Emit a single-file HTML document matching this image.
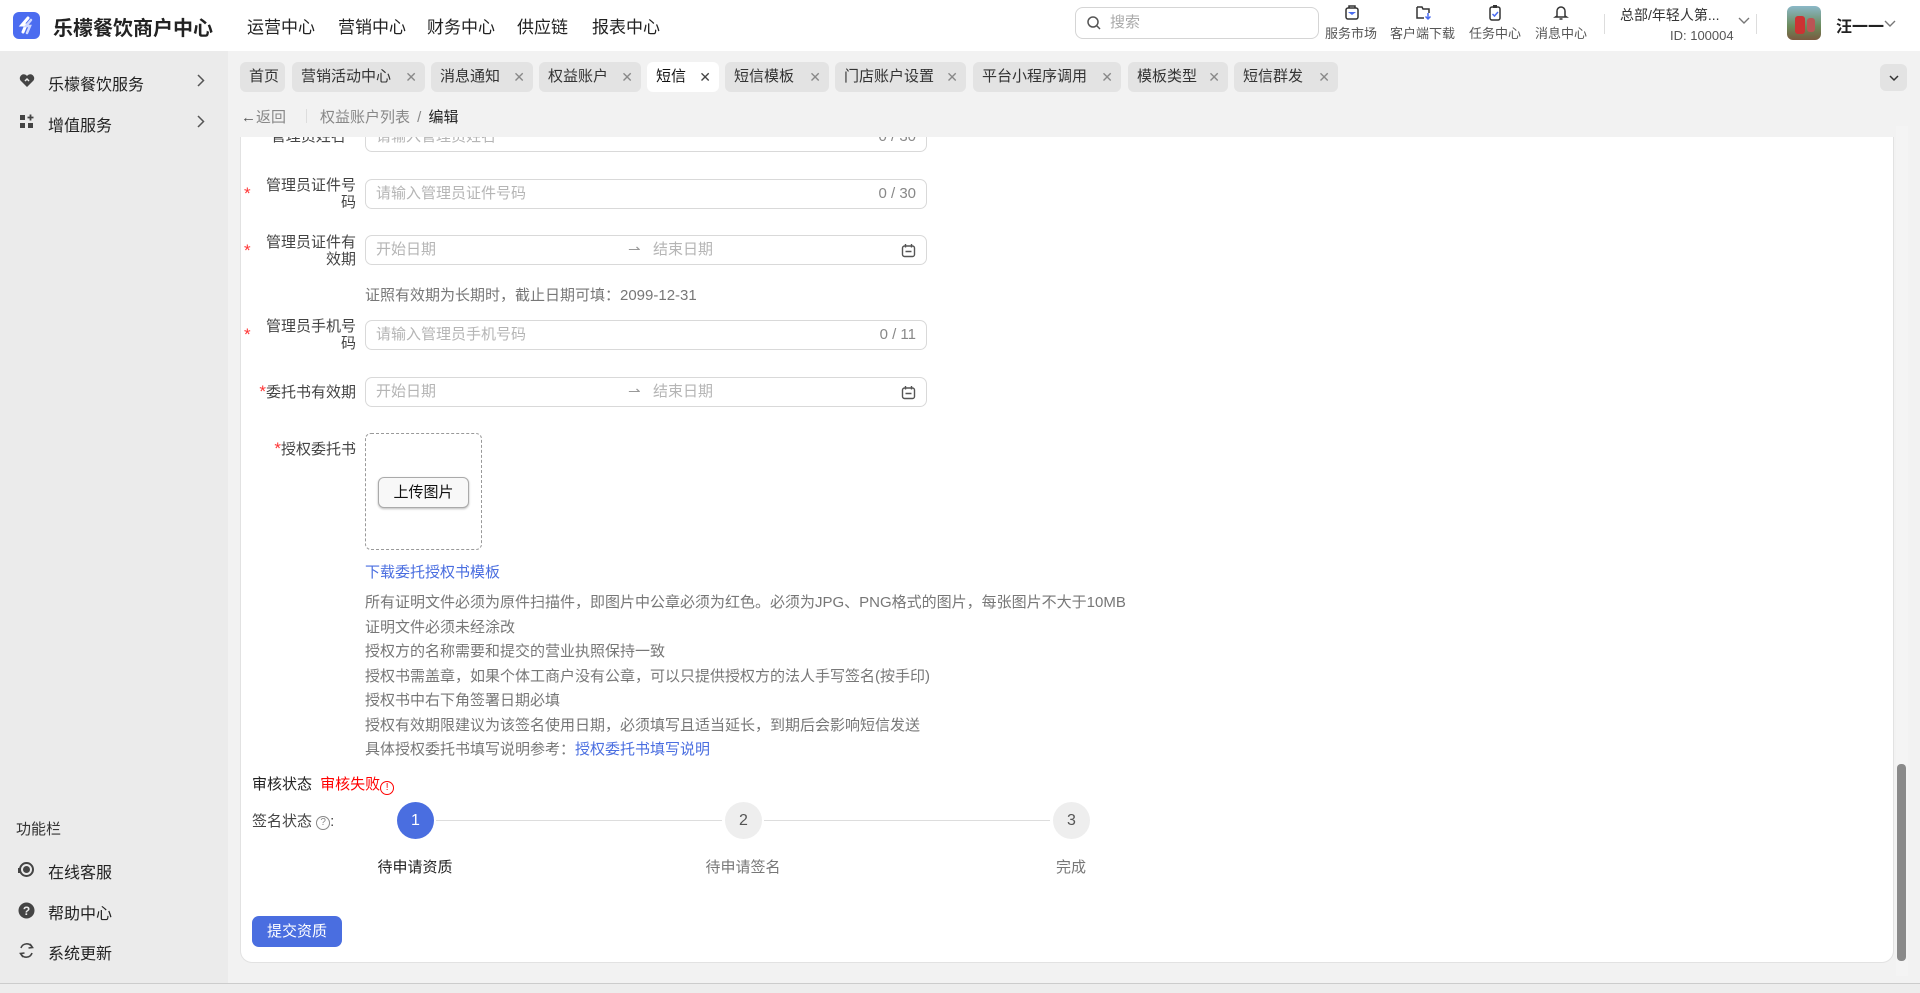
<!DOCTYPE html>
<html><head><meta charset="utf-8">
<style>
*{box-sizing:border-box;margin:0;padding:0}
body{width:1920px;height:993px;overflow:hidden;font-family:"Liberation Sans","Noto Sans CJK SC",sans-serif;background:#f2f2f2;position:relative;color:#333}
.abs{position:absolute}
.hdr{left:0;top:0;width:1920px;height:51px;background:#fff}
.side{left:0;top:51px;width:228px;height:932px;background:#ebebeb}
.nav{top:13px;font-size:17px;color:#222}
.tab{top:62px;height:30px;background:#e3e3e3;border-radius:6px;font-size:15px;color:#333;line-height:30px;padding-left:9px;white-space:nowrap}
.tab .x{position:absolute;right:8px;top:0;color:#888;font-size:14px}
.card{left:240px;top:137px;width:1654px;height:826px;background:#fff;border-radius:0 0 12px 12px;border:1px solid #e2e2e2;border-top:none}
.lbl{font-size:15px;color:#444;text-align:right;width:110px;line-height:17px}
.star{color:#f33;font-size:17px}
.inp{left:365px;width:562px;height:30px;border:1px solid #d9d9d9;border-radius:7px;font-size:15px;color:#b5b5b5;line-height:28px;padding-left:10px}
.cnt{position:absolute;right:10px;top:0;color:#888}
.note{left:365px;font-size:15px;color:#777;line-height:20px}
.si{font-size:13px;color:#555;top:23px}
</style></head><body>
<div class="abs hdr"></div>
<div class="abs" style="left:13px;top:12px;width:27px;height:27px;border-radius:6px;background:#4b6cf0"><svg width="27" height="27" viewBox="0 0 27 27"><path d="M15 6 L9 13 L13 13 L10 20" stroke="#fff" stroke-width="3" fill="none" stroke-linecap="round"/><path d="M18 8 L13 14 L17 14 L14 21" stroke="#cfd8ff" stroke-width="2.5" fill="none" stroke-linecap="round"/></svg></div>
<div class="abs" style="left:53px;top:12px;font-size:20px;font-weight:bold;color:#222">乐檬餐饮商户中心</div>
<div class="abs nav" style="left:247px">运营中心</div>
<div class="abs nav" style="left:338px">营销中心</div>
<div class="abs nav" style="left:427px">财务中心</div>
<div class="abs nav" style="left:517px">供应链</div>
<div class="abs nav" style="left:592px">报表中心</div>
<div class="abs" style="left:1075px;top:7px;width:244px;height:32px;border:1px solid #d5d5d5;border-radius:8px;font-size:15px;color:#aaa;line-height:30px;padding-left:34px">搜索
<svg class="abs" style="left:10px;top:7px" width="16" height="16" viewBox="0 0 16 16"><circle cx="7" cy="7" r="5" stroke="#555" stroke-width="1.5" fill="none"/><path d="M11 11 L14 14" stroke="#555" stroke-width="1.5"/></svg></div>
<svg class="abs" style="left:1344px;top:4px" width="16" height="17" viewBox="0 0 16 17"><rect x="2" y="4" width="12" height="11" rx="2" stroke="#333" stroke-width="1.5" fill="none"/><path d="M5 4 V2 H11 V4" stroke="#333" stroke-width="1.5" fill="none"/><path d="M4 8 H12 L8 11Z" fill="#4b6cf0"/></svg>
<div class="abs si" style="left:1325px">服务市场</div>
<svg class="abs" style="left:1415px;top:4px" width="17" height="17" viewBox="0 0 17 17"><path d="M2 3 H7 L8 5 H14 V9 M2 3 V14 H9" stroke="#333" stroke-width="1.5" fill="none"/><path d="M13 9 V15 M10.5 12.5 L13 15 L15.5 12.5" stroke="#4b6cf0" stroke-width="1.5" fill="none"/></svg>
<div class="abs si" style="left:1390px">客户端下载</div>
<svg class="abs" style="left:1487px;top:4px" width="16" height="17" viewBox="0 0 16 17"><rect x="3" y="3" width="10" height="13" rx="2" stroke="#333" stroke-width="1.5" fill="none"/><rect x="6" y="1" width="4" height="3" fill="#333"/><path d="M5.5 10 L7.5 12 L11 8" stroke="#4b6cf0" stroke-width="1.5" fill="none"/></svg>
<div class="abs si" style="left:1469px">任务中心</div>
<svg class="abs" style="left:1553px;top:4px" width="16" height="17" viewBox="0 0 16 17"><path d="M4 12 V7 A4 4 0 0 1 12 7 V12 L13.5 13 H2.5Z" stroke="#333" stroke-width="1.5" fill="none"/><path d="M6.5 15 H9.5" stroke="#333" stroke-width="1.5"/></svg>
<div class="abs si" style="left:1535px">消息中心</div>
<div class="abs" style="left:1604px;top:14px;width:1px;height:20px;background:#ddd"></div>
<div class="abs" style="left:1620px;top:5px;font-size:14px;color:#333">总部/年轻人第...</div>
<div class="abs" style="left:1670px;top:28px;font-size:13px;color:#555">ID: 100004</div>
<svg class="abs" style="left:1738px;top:17px" width="12" height="8" viewBox="0 0 12 8"><path d="M1 1 L6 6 L11 1" stroke="#777" stroke-width="1.4" fill="none"/></svg>
<div class="abs" style="left:1756px;top:14px;width:1px;height:20px;background:#ddd"></div>
<div class="abs" style="left:1787px;top:6px;width:34px;height:34px;border-radius:6px;background:linear-gradient(#8bb8c8,#6b8a5a 60%,#7a5a40)"><div class="abs" style="left:8px;top:10px;width:10px;height:18px;background:#c33;border-radius:3px"></div><div class="abs" style="left:20px;top:12px;width:8px;height:14px;background:#b55;border-radius:3px"></div></div>
<div class="abs" style="left:1836px;top:13px;font-size:16px;color:#222;font-weight:bold">汪一一</div>
<svg class="abs" style="left:1884px;top:20px" width="12" height="8" viewBox="0 0 12 8"><path d="M1 1 L6 6 L11 1" stroke="#777" stroke-width="1.4" fill="none"/></svg>

<div class="abs side"></div>
<svg class="abs" style="left:19px;top:73px" width="16" height="15" viewBox="0 0 16 15"><path d="M8 14 L1.5 7.5 A3.6 3.6 0 0 1 8 3 A3.6 3.6 0 0 1 14.5 7.5Z" fill="#444"/><path d="M6 8 L8 6 L10 8" stroke="#ebebeb" stroke-width="1.5" fill="none"/></svg>
<div class="abs" style="left:48px;top:71px;font-size:16px;color:#222">乐檬餐饮服务</div>
<svg class="abs" style="left:197px;top:74px" width="8" height="13" viewBox="0 0 8 13"><path d="M1 1 L6.5 6.5 L1 12" stroke="#555" stroke-width="1.5" fill="none"/></svg>
<svg class="abs" style="left:19px;top:114px" width="15" height="15" viewBox="0 0 15 15"><rect x="1" y="1" width="5" height="5" fill="#444"/><rect x="1" y="9" width="5" height="5" fill="#444"/><rect x="9" y="9" width="5" height="5" fill="#444"/><path d="M11.5 0.5 V6.5 M8.5 3.5 H14.5" stroke="#444" stroke-width="1.8"/></svg>
<div class="abs" style="left:48px;top:112px;font-size:16px;color:#222">增值服务</div>
<svg class="abs" style="left:197px;top:115px" width="8" height="13" viewBox="0 0 8 13"><path d="M1 1 L6.5 6.5 L1 12" stroke="#555" stroke-width="1.5" fill="none"/></svg>
<div class="abs" style="left:16px;top:818px;font-size:15px;color:#333">功能栏</div>
<svg class="abs" style="left:18px;top:861px" width="17" height="17" viewBox="0 0 17 17"><circle cx="8.5" cy="8.5" r="6.5" stroke="#444" stroke-width="2" fill="none"/><circle cx="8.5" cy="8.5" r="3.5" fill="#444"/><rect x="0" y="7" width="3" height="5" fill="#444"/></svg>
<div class="abs" style="left:48px;top:859px;font-size:16px;color:#222">在线客服</div>
<svg class="abs" style="left:18px;top:902px" width="17" height="17" viewBox="0 0 17 17"><circle cx="8.5" cy="8.5" r="8" fill="#444"/><text x="8.5" y="13" font-size="12" font-weight="bold" fill="#ebebeb" text-anchor="middle" font-family="Liberation Sans">?</text></svg>
<div class="abs" style="left:48px;top:900px;font-size:16px;color:#222">帮助中心</div>
<svg class="abs" style="left:18px;top:942px" width="17" height="17" viewBox="0 0 17 17"><path d="M3 6 A6 6 0 0 1 14 5" stroke="#444" stroke-width="1.6" fill="none"/><path d="M14 11 A6 6 0 0 1 3 12" stroke="#444" stroke-width="1.6" fill="none"/><path d="M12 2 L14.5 5.5 L10.5 6" stroke="#444" stroke-width="1.6" fill="none"/><path d="M5 15 L2.5 11.5 L6.5 11" stroke="#444" stroke-width="1.6" fill="none"/></svg>
<div class="abs" style="left:48px;top:940px;font-size:16px;color:#222">系统更新</div>

<div class="abs tab" style="left:240px;width:45px">首页</div>
<div class="abs tab" style="left:292px;width:133px">营销活动中心<span class="x">✕</span></div>
<div class="abs tab" style="left:431px;width:102px">消息通知<span class="x">✕</span></div>
<div class="abs tab" style="left:539px;width:102px">权益账户<span class="x">✕</span></div>
<div class="abs tab" style="left:647px;width:72px;background:#fff;color:#111">短信<span class="x" style="color:#444">✕</span></div>
<div class="abs tab" style="left:725px;width:104px">短信模板<span class="x">✕</span></div>
<div class="abs tab" style="left:835px;width:131px">门店账户设置<span class="x">✕</span></div>
<div class="abs tab" style="left:973px;width:148px">平台小程序调用<span class="x">✕</span></div>
<div class="abs tab" style="left:1128px;width:100px">模板类型<span class="x">✕</span></div>
<div class="abs tab" style="left:1234px;width:104px">短信群发<span class="x">✕</span></div>
<div class="abs" style="left:1880px;top:64px;width:27px;height:27px;background:#e3e3e3;border-radius:6px"><svg class="abs" style="left:9px;top:11px" width="10" height="7" viewBox="0 0 10 7"><path d="M1 1 L5 5 L9 1" stroke="#333" stroke-width="1.5" fill="none"/></svg></div>

<div class="abs" style="left:241px;top:106px;font-size:15px;color:#888"><span style="color:#555">←</span>返回</div>
<div class="abs" style="left:306px;top:109px;width:1px;height:14px;background:#ddd"></div>
<div class="abs" style="left:320px;top:106px;font-size:15px;color:#888">权益账户列表 <span style="margin:0 3px">/</span> <span style="color:#222">编辑</span></div>

<div class="abs card"></div>
<div class="abs" style="left:1896px;top:126px;width:12px;height:850px;background:#f4f4f4"></div>
<div class="abs" style="left:1897px;top:764px;width:9px;height:197px;background:#8a8a8a;border-radius:4px"></div>
<div class="abs" style="left:0;top:983px;width:1920px;height:10px;background:#ededed;border-top:1px solid #ccc"></div>

<div class="abs" style="left:240px;top:137px;width:1650px;height:16px;overflow:hidden">
<div class="abs" style="left:20px;top:-12px;font-size:15px;color:#444"><span class="star">*</span> 管理员姓名</div>
<div class="abs inp" style="left:125px;top:-15px;">请输入管理员姓名<span class="cnt">0 / 30</span></div>
</div>

<div class="abs star" style="left:244px;top:184px">*</div>
<div class="abs lbl" style="left:246px;top:177px">管理员证件号<br>码</div>
<div class="abs inp" style="top:179px">请输入管理员证件号码<span class="cnt">0 / 30</span></div>

<div class="abs star" style="left:244px;top:241px">*</div>
<div class="abs lbl" style="left:246px;top:234px">管理员证件有<br>效期</div>
<div class="abs inp" style="top:235px">开始日期<span class="abs" style="left:262px;color:#999">⇀</span><span class="abs" style="left:287px">结束日期</span>
<svg class="abs" style="right:10px;top:7px" width="15" height="15" viewBox="0 0 15 15"><rect x="1.5" y="3" width="12" height="10.5" rx="2" stroke="#555" stroke-width="1.4" fill="none"/><path d="M4.5 1 V4.5 M10.5 1 V4.5 M4.5 8.5 H10.5" stroke="#555" stroke-width="1.4"/></svg></div>
<div class="abs note" style="top:286px">证照有效期为长期时，截止日期可填：2099-12-31</div>

<div class="abs star" style="left:244px;top:325px">*</div>
<div class="abs lbl" style="left:246px;top:318px">管理员手机号<br>码</div>
<div class="abs inp" style="top:320px">请输入管理员手机号码<span class="cnt">0 / 11</span></div>

<div class="abs lbl" style="left:246px;top:383px;width:110px"><span class="star">*</span>委托书有效期</div>
<div class="abs inp" style="top:377px">开始日期<span class="abs" style="left:262px;color:#999">⇀</span><span class="abs" style="left:287px">结束日期</span>
<svg class="abs" style="right:10px;top:7px" width="15" height="15" viewBox="0 0 15 15"><rect x="1.5" y="3" width="12" height="10.5" rx="2" stroke="#555" stroke-width="1.4" fill="none"/><path d="M4.5 1 V4.5 M10.5 1 V4.5 M4.5 8.5 H10.5" stroke="#555" stroke-width="1.4"/></svg></div>

<div class="abs lbl" style="left:246px;top:440px"><span class="star">*</span>授权委托书</div>
<div class="abs" style="left:365px;top:433px;width:117px;height:117px;border:1px dashed #999;border-radius:6px"></div>
<div class="abs" style="left:378px;top:477px;width:91px;height:31px;border:1px solid #aaa;border-radius:6px;background:#f8f8f8;box-shadow:0 1px 2px #bbb;font-size:15px;color:#111;text-align:center;line-height:29px">上传图片</div>
<div class="abs note" style="top:563px;color:#4a6ee0">下载委托授权书模板</div>
<div class="abs note" style="top:591px;line-height:24.5px">所有证明文件必须为原件扫描件，即图片中公章必须为红色。必须为JPG、PNG格式的图片，每张图片不大于10MB<br>证明文件必须未经涂改<br>授权方的名称需要和提交的营业执照保持一致<br>授权书需盖章，如果个体工商户没有公章，可以只提供授权方的法人手写签名(按手印)<br>授权书中右下角签署日期必填<br>授权有效期限建议为该签名使用日期，必须填写且适当延长，到期后会影响短信发送<br>具体授权委托书填写说明参考：<span style="color:#4a6ee0">授权委托书填写说明</span></div>

<div class="abs" style="left:252px;top:773px;font-size:15px;color:#222">审核状态 <span style="color:#f00;margin-left:4px">审核失败</span><span style="display:inline-block;width:14px;height:14px;border:1.5px solid #f00;border-radius:50%;color:#f00;font-size:10px;text-align:center;line-height:11px;vertical-align:-1px">!</span></div>
<div class="abs" style="left:252px;top:810px;font-size:15px;color:#444">签名状态 <span style="display:inline-block;width:14px;height:14px;border:1px solid #888;border-radius:50%;color:#888;font-size:10px;text-align:center;line-height:12px;vertical-align:1px">?</span>:</div>

<div class="abs" style="left:436px;top:820px;width:286px;height:1px;background:#ddd"></div>
<div class="abs" style="left:764px;top:820px;width:286px;height:1px;background:#ddd"></div>
<div class="abs" style="left:397px;top:802px;width:37px;height:37px;border-radius:50%;background:#4a6ee0;color:#fff;text-align:center;line-height:37px;font-size:16px">1</div>
<div class="abs" style="left:725px;top:802px;width:37px;height:37px;border-radius:50%;background:#eee;color:#555;text-align:center;line-height:37px;font-size:16px">2</div>
<div class="abs" style="left:1053px;top:802px;width:37px;height:37px;border-radius:50%;background:#eee;color:#555;text-align:center;line-height:37px;font-size:16px">3</div>
<div class="abs" style="left:355px;top:856px;width:120px;text-align:center;font-size:15px;color:#222">待申请资质</div>
<div class="abs" style="left:683px;top:856px;width:120px;text-align:center;font-size:15px;color:#777">待申请签名</div>
<div class="abs" style="left:1011px;top:856px;width:120px;text-align:center;font-size:15px;color:#777">完成</div>

<div class="abs" style="left:252px;top:916px;width:90px;height:31px;border-radius:7px;background:#4a6ee0;color:#fff;font-size:15px;text-align:center;line-height:31px">提交资质</div>
</body></html>
